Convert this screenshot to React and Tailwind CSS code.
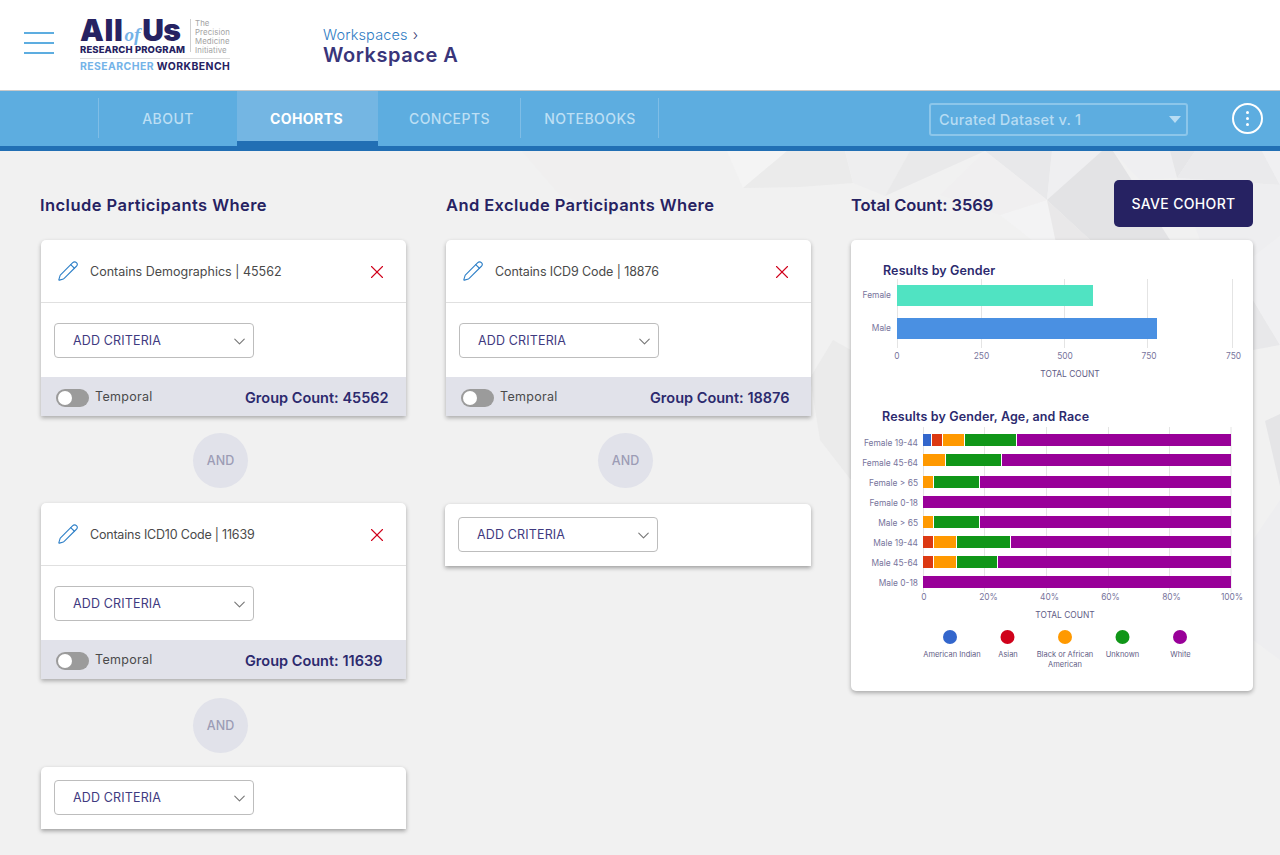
import React from "react";
import { Pencil, X, ChevronDown } from "lucide-react";

const FONT = "[font-family:Inter,'Liberation_Sans',sans-serif]";

function Background() {
  const polys = [
    ["800,151 845,151 853,183 800,187", "#ebebeb"],
    ["845,151 910,151 885,196 853,183", "#eeeeef"],
    ["910,151 985,151 885,196", "#e9e9ea"],
    ["985,151 1052,151 1047,200", "#e8e8ea"],
    ["1052,151 1102,151 1047,200", "#efeff1"],
    ["1102,151 1113,151 1170,240 1114,262 1047,200", "#e3e3e5"],
    ["1113,151 1170,151 1177,178 1140,180", "#efeff1"],
    ["1170,151 1195,151 1177,178", "#e6e6e8"],
    ["1195,151 1262,151 1280,185 1177,178", "#eaeaec"],
    ["1262,151 1280,151 1280,185", "#f0f0f2"],
    ["1047,200 1000,215 1060,262", "#f3f3f4"],
    ["1047,200 1114,262 1060,262", "#e9e8e9"],
    ["985,151 1047,200 1000,215 940,195", "#f0eff0"],
    ["1177,178 1280,185 1280,236 1253,257 1200,240", "#eeeef0"],
    ["1253,300 1280,345 1253,350", "#e8e8ea"],
    ["1265,421 1280,414 1280,486", "#e5e5e7"],
    ["1253,257 1280,236 1280,345 1253,300", "#f0f0f2"],
    ["1253,540 1280,500 1280,660 1253,640", "#eeeef0"],
    ["810,378 833,340 851,350 851,480 820,440", "#ebebeb"],
    ["522,151 630,151 630,220 560,195", "#f0efef"],
    ["727,151 787,151 743,188", "#f4f4f4"],
    ["787,151 800,151 800,187 743,188", "#ebebeb"],
  ];
  return (
    <svg className="absolute left-0 top-0 w-[1280px] h-[855px]" viewBox="0 0 1280 855">
      {polys.map(([p, c]) => (
        <polygon key={p} points={p} fill={c} />
      ))}
    </svg>
  );
}

function Logo() {
  return (
    <div className="w-[150px] text-[#262262]">
      <div className="flex">
        <div className="w-[106px] shrink-0 pt-[1px]">
          <div className="flex items-baseline h-[25px] whitespace-nowrap">
            <span className="font-black text-[30px] tracking-[0.6px] leading-[23px]">All</span>
            <span className="italic text-[#74b3e8] text-[19px] font-bold [font-family:'Liberation_Serif',serif] leading-[23px] ml-[1px] mr-[2px]">of</span>
            <span className="font-black text-[30px] tracking-[-0.6px] leading-[23px]">Us</span>
          </div>
          <div className="text-[9.5px] font-extrabold leading-[11px] tracking-[0.1px] whitespace-nowrap">RESEARCH PROGRAM</div>
        </div>
        <div className="ml-[4px] pl-[4px] border-l border-[#cfcfcf] text-[7.8px] leading-[9px] text-[#a3a3a3] whitespace-nowrap h-[33px] mt-[1px] tracking-[0.1px]">
          <div>The</div>
          <div>Precision</div>
          <div>Medicine</div>
          <div>Initiative</div>
        </div>
      </div>
      <div className="h-px bg-[#dedede] mt-[3px]" />
      <div className="text-[10.4px] font-bold leading-[12px] mt-[2px] whitespace-nowrap tracking-[0.45px]">
        <span className="text-[#74b3e8]">RESEARCHER</span> WORKBENCH
      </div>
    </div>
  );
}

function Header() {
  return (
    <header className="h-[91px] bg-white border-b border-[#c9c9c9] flex items-center relative">
      <div className="ml-[24px] w-[30px] flex flex-col gap-[8.3px] mt-[-4px]">
        <span className="h-[2px] bg-[#5dade0]" />
        <span className="h-[2px] bg-[#5dade0]" />
        <span className="h-[2px] bg-[#5dade0]" />
      </div>
      <div className="ml-[26px] mt-[1px]"><Logo /></div>
      <div className="ml-[93px]">
        <div className="text-[14.5px] leading-[20px] text-[#2f7cc3] font-light tracking-[0.15px] flex">
          Workspaces<span className="ml-[5px] text-[#3a3a6e]">›</span>
        </div>
        <div className="text-[20px] leading-[21px] font-semibold text-[#39357a] tracking-[0.55px]">Workspace A</div>
      </div>
    </header>
  );
}

function Tab({ label, w, active, divider }) {
  return (
    <div
      className={
        "relative h-[55px] flex items-center justify-center text-[14px] tracking-[0.45px] " +
        (active ? "bg-[#74b6e3] text-white font-bold border-b-[5px] border-[#216fb4] pt-[5px] pr-[2px]" : "text-[#bcdff4] font-medium")
      }
      style={{ width: w }}
    >
      {label}
      {divider && <span className="absolute right-0 top-[7px] h-[40px] w-px bg-[#7fbde6]" />}
    </div>
  );
}

function Nav() {
  return (
    <nav className="h-[60px] bg-[#5dade0] border-b-[5px] border-[#216fb4] flex items-start">
      <div className="ml-[98px] mt-[7px] h-[40px] w-px bg-[#7fbde6]" />
      <Tab label="ABOUT" w={138} />
      <Tab label="COHORTS" w={141} active />
      <Tab label="CONCEPTS" w={143} divider />
      <Tab label="NOTEBOOKS" w={138} divider />
      <div className="ml-[270px] mt-[12px] w-[259px] h-[33px] rounded-[3px] border-2 border-[#8cc6ea] flex items-center pl-[8px] pr-[5px] justify-between">
        <span className="text-[14.5px] font-medium text-[#b7dcf3] tracking-[0.2px] mt-px">Curated Dataset v. 1</span>
        <span className="w-0 h-0 border-l-[6.5px] border-r-[6.5px] border-t-[7px] border-l-transparent border-r-transparent border-t-[#b7dcf3]" />
      </div>
      <div className="ml-[44px] mt-[12px] w-[31px] h-[31px] rounded-full border-2 border-white flex flex-col items-center justify-center gap-[3px]">
        <span className="w-[3px] h-[3px] rounded-full bg-white" />
        <span className="w-[3px] h-[3px] rounded-full bg-white" />
        <span className="w-[3px] h-[3px] rounded-full bg-white" />
      </div>
    </nav>
  );
}

function AddCriteria() {
  return (
    <div className="w-[200px] h-[35px] rounded-[4px] border border-[#bdbdbd] bg-white flex items-center pl-[18px] pr-[4.5px] justify-between">
      <span className="text-[12.5px] text-[#3f3a80] tracking-[0.15px] mt-px">ADD CRITERIA</span>
      <ChevronDown size={19} strokeWidth={1.4} className="text-[#777777] mt-[1px]" />
    </div>
  );
}

function GroupCard({ title, count, track }) {
  return (
    <div className="bg-white rounded-t-[5px] shadow-[0_2px_4px_rgba(0,0,0,0.3)]">
      <div className="h-[63px] border-b border-[#e0e0e0] flex items-center pl-[16px] pr-[18.5px]">
        <Pencil size={22} strokeWidth={1.2} className="text-[#2f80c8] shrink-0" />
        <span className={"ml-[11px] mt-[2px] text-[12.5px] text-[#4a4a4a] " + track}>{title} | {count}</span>
        <X size={22} strokeWidth={1.2} className="ml-auto mt-[1px] text-[#d0021b]" />
      </div>
      <div className="h-[74px] pl-[13px] pt-[20px]"><AddCriteria /></div>
      <div className="h-[39px] bg-[#e1e2ea] flex items-center pl-[15px]">
        <span className="w-[33px] h-[18px] rounded-full bg-[#9b9b9b] flex items-center pl-[2px] mt-[2px]">
          <span className="w-[14px] h-[14px] rounded-full bg-white" />
        </span>
        <span className="ml-[6px] mt-px text-[12.5px] text-[#4a4a4a] tracking-[0.3px]">Temporal</span>
        <span className="ml-auto mt-[2px] w-[161px] text-[14.5px] font-semibold text-[#2c2a6e] whitespace-nowrap">Group Count: {count}</span>
      </div>
    </div>
  );
}

function And() {
  return (
    <div className="ml-[152px] w-[55px] h-[55px] rounded-full bg-[#e1e2ea] flex items-center justify-center pt-[1px] text-[12.5px] font-medium text-[#9c9cb5]">
      AND
    </div>
  );
}

function EmptyCard({ className = "" }) {
  return (
    <div className={"bg-white rounded-t-[5px] h-[62px] pl-[13px] pt-[13px] shadow-[0_2px_4px_rgba(0,0,0,0.35)] " + className}>
      <AddCriteria />
    </div>
  );
}

function Heading({ className = "", children }) {
  return (
    <div className={"h-[47px] flex items-center pt-[3px] text-[16.5px] font-semibold text-[#262262] whitespace-nowrap " + className}>
      {children}
    </div>
  );
}

const TICK = "#77749c";

function GenderChart() {
  const xs = [897.5, 981.5, 1064.5, 1147.5, 1232.5];
  return (
    <svg className="block w-[402px] h-[108px]" viewBox="851 278 402 108">
      {xs.map((x) => <line key={x} x1={x} x2={x} y1="279" y2="348" stroke="#e4e4e4" />)}
      <rect x="897" y="285" width="196" height="21" fill="#50e3c2" />
      <rect x="897" y="318" width="260" height="21" fill="#4a90e2" />
      <g fill={TICK} fontSize="8.4" textAnchor="end">
        <text x="891" y="298">Female</text>
        <text x="891" y="331">Male</text>
      </g>
      <g fill={TICK} fontSize="8.4" textAnchor="middle">
        <text x="897" y="359">0</text>
        <text x="981.5" y="359">250</text>
        <text x="1065" y="359">500</text>
        <text x="1149" y="359">750</text>
        <text x="1233.5" y="359">750</text>
      </g>
      <text x="1070" y="377" fill="#5f5c85" fontSize="8.4" textAnchor="middle">TOTAL COUNT</text>
    </svg>
  );
}

const B = "#3366cc", R = "#dc3912", O = "#ff9900", G = "#109618", P = "#990099";
const ROWS = [
  ["Female 19-44", 434, 446, [[923, 931, B], [932, 942, R], [943, 964, O], [965, 1016, G], [1017, 1231, P]]],
  ["Female 45-64", 454, 466, [[923, 945, O], [946, 1001, G], [1002, 1231, P]]],
  ["Female > 65", 476, 486, [[923, 933, O], [934, 979, G], [980, 1231, P]]],
  ["Female 0-18", 496, 506, [[923, 1231, P]]],
  ["Male > 65", 516, 526, [[923, 933, O], [934, 979, G], [980, 1231, P]]],
  ["Male 19-44", 536, 546, [[923, 933, R], [934, 956, O], [957, 1010, G], [1011, 1231, P]]],
  ["Male 45-64", 556, 566, [[923, 933, R], [934, 956, O], [957, 997, G], [998, 1231, P]]],
  ["Male 0-18", 576, 586, [[923, 1231, P]]],
];
const LEGEND = [
  [950, 952, "#3366cc", ["American Indian"]],
  [1007.5, 1008, "#d0021b", ["Asian"]],
  [1065, 1065, "#ff9900", ["Black or African", "American"]],
  [1122.5, 1122.5, "#109618", ["Unknown"]],
  [1180, 1180.5, "#990099", ["White"]],
];

function RaceChart() {
  const xs = [923.5, 984.5, 1046.5, 1108.5, 1169.5, 1231];
  const ticks = [[924, "0"], [988.5, "20%"], [1049.5, "40%"], [1110.5, "60%"], [1171.5, "80%"], [1232, "100%"]];
  return (
    <svg className="block w-[402px] h-[246px]" viewBox="851 426 402 246">
      {xs.map((x) => <line key={x} x1={x} x2={x} y1="427" y2="592" stroke="#e4e4e4" />)}
      {ROWS.map(([label, y, base, segs]) => (
        <g key={label}>
          <text x="918" y={base} fill={TICK} fontSize="8.4" textAnchor="end">{label}</text>
          {segs.map(([a, b, c]) => <rect key={a} x={a} y={y} width={b - a} height="12" fill={c} />)}
        </g>
      ))}
      <g fill={TICK} fontSize="8.4" textAnchor="middle">
        {ticks.map(([x, t]) => <text key={x} x={x} y="600">{t}</text>)}
      </g>
      <text x="1065" y="618" fill="#5f5c85" fontSize="8.4" textAnchor="middle">TOTAL COUNT</text>
      {LEGEND.map(([cx, tx, c, lines]) => (
        <g key={cx}>
          <circle cx={cx} cy="637" r="7" fill={c} />
          {lines.map((l, i) => (
            <text key={l} x={tx} y={657 + i * 9.5} fill="#5f5c85" fontSize="7.5" textAnchor="middle">{l}</text>
          ))}
        </g>
      ))}
    </svg>
  );
}

export default function App() {
  return (
    <div className={"relative w-[1280px] h-[855px] overflow-hidden bg-[#f1f1f1] " + FONT}>
      <Background />
      <div className="relative">
        <Header />
        <Nav />
        <main className="flex gap-[40px] pl-[41px] pt-[29px]">
          <section className="w-[365px]">
            <Heading className="-ml-px tracking-[0.45px]">Include Participants Where</Heading>
            <div className="mt-[13px]"><GroupCard title="Contains Demographics" count="45562" track="tracking-[0px]" /></div>
            <div className="mt-[17px] mb-[15px]"><And /></div>
            <GroupCard title="Contains ICD10 Code" count="11639" track="tracking-[-0.2px]" />
            <div className="mt-[19px] mb-[14px]"><And /></div>
            <EmptyCard />
          </section>
          <section className="w-[365px]">
            <Heading className="tracking-[0.4px]">And Exclude Participants Where</Heading>
            <div className="mt-[13px]"><GroupCard title="Contains ICD9 Code" count="18876" track="tracking-[-0.1px]" /></div>
            <div className="mt-[17px] mb-[16px]"><And /></div>
            <EmptyCard className="-ml-px" />
          </section>
          <section className="w-[402px]">
            <div className="flex items-start justify-between">
              <Heading className="tracking-[-0.05px]">Total Count: 3569</Heading>
              <button className="w-[139px] h-[47px] rounded-[5px] bg-[#262262] text-white text-[14px] font-medium tracking-[0.35px]">SAVE COHORT</button>
            </div>
            <div className="mt-[13px] h-[451px] bg-white rounded-[5px] shadow-[0_2px_4px_rgba(0,0,0,0.3)]">
              <div className="pt-[22px] pl-[32px] h-[38px] text-[12.5px] leading-[18px] font-semibold text-[#2c2a6e] tracking-[0.12px]">Results by Gender</div>
              <GenderChart />
              <div className="mt-[21px] pl-[31px] h-[19px] pt-px text-[12.5px] leading-[18px] font-semibold text-[#2c2a6e] tracking-[0.13px]">Results by Gender, Age, and Race</div>
              <RaceChart />
            </div>
          </section>
        </main>
      </div>
    </div>
  );
}
